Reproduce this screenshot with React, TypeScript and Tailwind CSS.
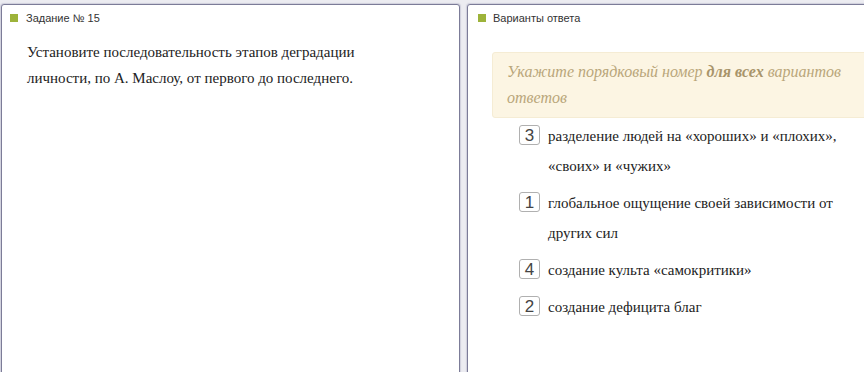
import React from "react";

const items = [
  { n: "3", lines: ["разделение людей на «хороших» и «плохих»,", "«своих» и «чужих»"] },
  { n: "1", lines: ["глобальное ощущение своей зависимости от", "других сил"] },
  { n: "4", lines: ["создание культа «самокритики»"] },
  { n: "2", lines: ["создание дефицита благ"] },
];

const sans = "font-['Liberation_Sans',Arial,sans-serif]";
const serif = "font-['Liberation_Serif','Times_New_Roman',serif]";

export default function App() {
  return (
    <div className="w-[864px] h-[372px] overflow-hidden bg-[#ececf1] flex gap-[7px] pt-[4px] pl-[1px]">
      <div className="w-[459px] h-[400px] shrink-0 bg-white border border-[#7c7c98] rounded-[3px] shadow-[0_0_1px_1px_rgba(200,200,215,0.8)]">
        <div className="flex items-center h-[16px] mt-[5px]">
          <div className="w-[8px] h-[8px] bg-[#9db33a] ml-[8px]" />
          <span className={`ml-[8px] text-[11px] text-[#333] leading-none ${sans}`}>Задание № 15</span>
        </div>
        <div className={`pl-[25px] pt-[13px] text-[15px] leading-[26px] text-[#222] ${serif}`}>
          <div>Установите последовательность этапов деградации</div>
          <div>личности, по А. Маслоу, от первого до последнего.</div>
        </div>
      </div>
      <div className="w-[420px] h-[400px] shrink-0 bg-white border border-[#7c7c98] rounded-[3px] shadow-[0_0_1px_1px_rgba(200,200,215,0.8)]">
        <div className="flex items-center h-[16px] mt-[5px]">
          <div className="w-[8px] h-[8px] bg-[#9db33a] ml-[10px]" />
          <span className={`ml-[7px] text-[11px] text-[#333] leading-none ${sans}`}>Варианты ответа</span>
        </div>
        <div className={`ml-[24px] mt-[26px] w-[420px] h-[66px] bg-[#fcf5e3] border border-[#f5ecd4] rounded-[3px] pl-[14px] pt-[6px] text-[16px] leading-[26px] italic text-[#b9a67a] ${serif}`}>
          <div>
            Укажите порядковый номер <b className="text-[#a8946a]">для всех</b> вариантов
          </div>
          <div>ответов</div>
        </div>
        <div className="pl-[51px] pt-[3px] flex flex-col gap-[7px]">
          {items.map((it) => (
            <div key={it.n} className="flex">
              <div className={`w-[21px] h-[20px] mt-[4px] border border-[#b0b0b0] rounded-[3px] flex items-center justify-center text-[17px] text-[#444] leading-none bg-white ${sans}`}>
                {it.n}
              </div>
              <div className={`ml-[8px] text-[15px] leading-[30px] text-[#222] ${serif}`}>
                {it.lines.map((l, i) => (
                  <div key={i}>{l}</div>
                ))}
              </div>
            </div>
          ))}
        </div>
      </div>
    </div>
  );
}
